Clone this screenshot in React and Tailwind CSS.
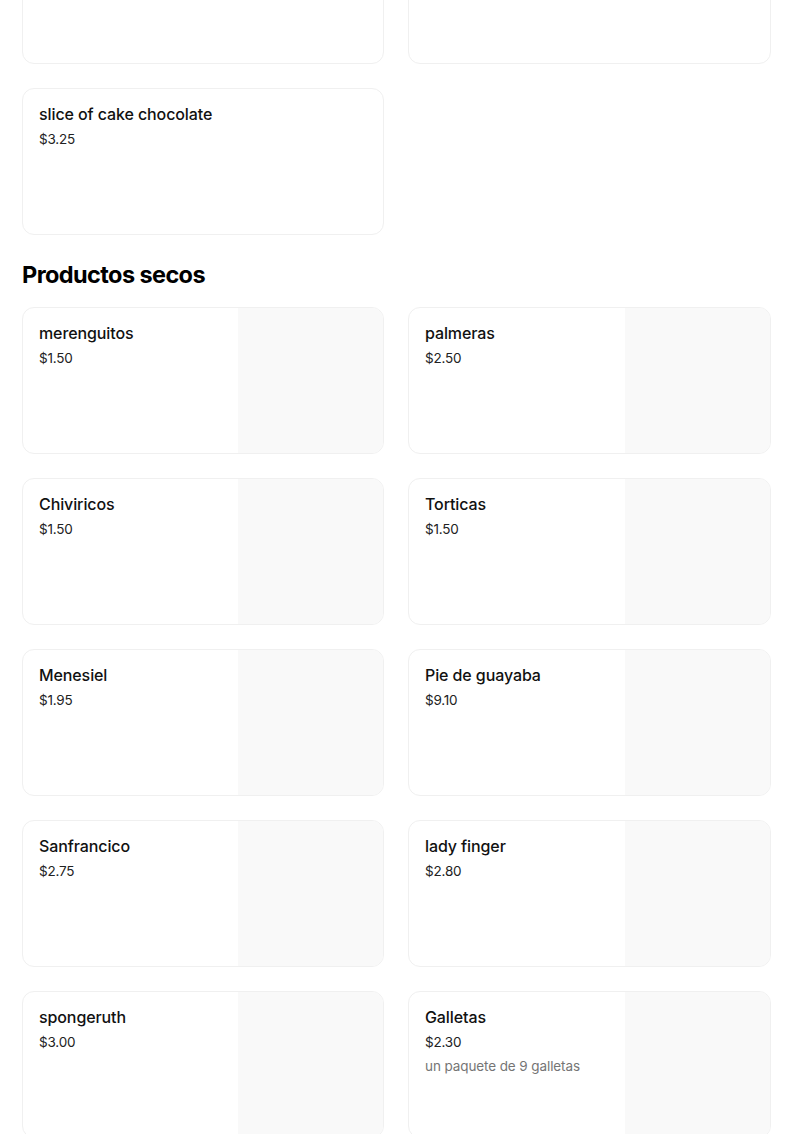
import React from "react";

const top = [{ name: "", price: "" }, { name: "", price: "" }];

const secos = [
  { name: "merenguitos", price: "$1.50" },
  { name: "palmeras", price: "$2.50" },
  { name: "Chiviricos", price: "$1.50" },
  { name: "Torticas", price: "$1.50" },
  { name: "Menesiel", price: "$1.95" },
  { name: "Pie de guayaba", price: "$9.10" },
  { name: "Sanfrancico", price: "$2.75" },
  { name: "lady finger", price: "$2.80" },
  { name: "spongeruth", price: "$3.00" },
  { name: "Galletas", price: "$2.30", desc: "un paquete de 9 galletas" },
];

function Card({ item, image }) {
  return (
    <div className="flex h-[147px] overflow-hidden rounded-[12px] border border-[#f0f0f0] bg-white">
      <div className="flex-1 min-w-0 px-4 pt-[13px]">
        <div className="text-[16px] font-medium leading-6 tracking-[-0.1px] text-[#111]">{item.name}</div>
        <div className="mt-[3px] text-[13.5px] leading-5 tracking-[-0.2px] text-[#222]">{item.price}</div>
        {item.desc && (
          <div className="mt-1 text-[13.5px] leading-5 tracking-[-0.1px] text-[#757575]">{item.desc}</div>
        )}
      </div>
      {image && <div className="w-[145px] shrink-0 bg-[#f9f9f9]" />}
    </div>
  );
}

export default function App() {
  return (
    <div
      className="min-h-[1134px] bg-white overflow-hidden"
      style={{ fontFamily: "Inter, 'Noto Sans', sans-serif" }}
    >
      <div className="ml-[22px] w-[749px] -mt-[83px]">
        <div className="grid grid-cols-[362px_363px] gap-6">
          {top.map((t, i) => (
            <Card key={i} item={t} image={false} />
          ))}
          <Card item={{ name: "slice of cake chocolate", price: "$3.25" }} image={false} />
        </div>
        <h2 className="mt-[24px] mb-[16px] text-[23.5px] font-bold leading-8 tracking-[-0.6px] text-black">
          Productos secos
        </h2>
        <div className="grid grid-cols-[362px_363px] gap-6 pb-6">
          {secos.map((s, i) => (
            <Card key={i} item={s} image={true} />
          ))}
        </div>
      </div>
    </div>
  );
}
